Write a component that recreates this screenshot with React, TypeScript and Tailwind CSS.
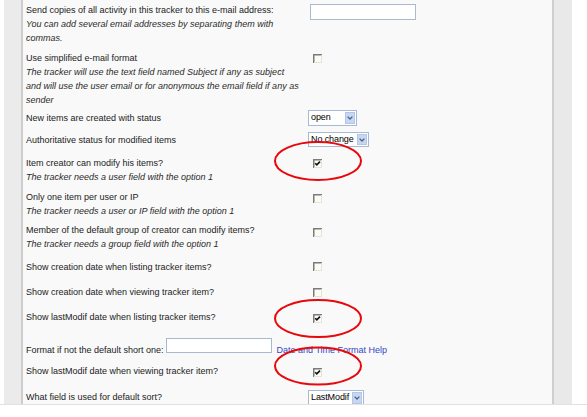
import React from 'react';

const font = "font-['Liberation_Sans',Arial,sans-serif]";

const Check = ({ checked = false, className = '' }: { checked?: boolean; className?: string }) => (
    <svg width="9" height="9" viewBox="0 0 9 9" className={`block ${className}`}>
        <rect x="0" y="0" width="9" height="9" fill="#fcfcf4" />
        <path d="M0.75 9 V0.75 H9" fill="none" stroke="#7b7b78" strokeWidth="1.5" />
        <path d="M8.5 1 V8.5 H1" fill="none" stroke="#e4e3da" strokeWidth="1" />
        {checked && <path d="M2.2 4.2 L3.8 5.9 L7 2.6" fill="none" stroke="#111" strokeWidth="1.6" />}
    </svg>
);

const Select = ({ value, className = '' }: { value: string; className?: string }) => (
    <div className={`flex items-stretch border border-[#a7b9d6] bg-white ${className}`}>
        <div className="flex-1 pl-[2px] text-[9px] leading-[13px] tracking-[-0.1px] text-black whitespace-nowrap">{value}</div>
        <div className="w-[10px] my-[1px] mr-[1px] bg-[#c7d6f1] border border-[#b3c6e6] flex items-center justify-center">
            <svg width="6" height="4" viewBox="0 0 6 4">
                <path d="M0.6 0.6 L3 3 L5.4 0.6" fill="none" stroke="#4b5f87" strokeWidth="1.3" />
            </svg>
        </div>
    </div>
);

const Label = ({ children }: { children: React.ReactNode }) => <div className="text-[#222]">{children}</div>;
const Hint = ({ children }: { children: React.ReactNode }) => <div className="italic text-[#2a2a2a]">{children}</div>;

export default function App() {
    return (
        <div className={`w-[587px] h-[417px] bg-white overflow-hidden relative ${font}`}>
            <div className="flex h-[405px] border-b border-[#e2e2e2]">
                <div className="w-[4px] bg-white" />
                <div className="w-[17px] bg-[#ebebeb]" />
                <div className="w-[2px] bg-[#cdcdcd]" />

                {/* settings table */}
                <div className="w-[529px] bg-[#f9f9f9] pl-[3px] pt-[3px] text-[9px] leading-[14px] overflow-hidden">
                    <div className="flex h-[48px]">
                        <div className="w-[282px]">
                            <Label>Send copies of all activity in this tracker to this e-mail address:</Label>
                            <Hint>You can add several email addresses by separating them with<br />commas.</Hint>
                        </div>
                        <div className="mt-[1px] ml-[2px] w-[106px] h-[16px] border border-[#a9b9cf] bg-white" />
                    </div>

                    <div className="flex h-[60px]">
                        <div className="w-[282px]">
                            <Label>Use simplified e-mail format</Label>
                            <Hint>
                                The tracker will use the text field named Subject if any as subject<br />
                                and will use the user email or for anonymous the email field if any as<br />
                                sender
                            </Hint>
                        </div>
                        <Check className="mt-[3px] ml-[5px]" />
                    </div>

                    <div className="flex h-[22px]">
                        <div className="w-[282px]"><Label>New items are created with status</Label></div>
                        <Select value="open" className="-mt-[1px] w-[49px] h-[16px]" />
                    </div>

                    <div className="flex h-[23px]">
                        <div className="w-[282px]"><Label>Authoritative status for modified items</Label></div>
                        <Select value="No change" className="-mt-[1px] w-[61px] h-[15px]" />
                    </div>

                    <div className="flex h-[34px]">
                        <div className="w-[282px]">
                            <Label>Item creator can modify his items?</Label>
                            <Hint>The tracker needs a user field with the option 1</Hint>
                        </div>
                        <Check checked className="mt-[3px] ml-[5px]" />
                    </div>

                    <div className="flex h-[33px]">
                        <div className="w-[282px]">
                            <Label>Only one item per user or IP</Label>
                            <Hint>The tracker needs a user or IP field with the option 1</Hint>
                        </div>
                        <Check className="mt-[4px] ml-[5px]" />
                    </div>

                    <div className="flex h-[37px]">
                        <div className="w-[282px]">
                            <Label>Member of the default group of creator can modify items?</Label>
                            <Hint>The tracker needs a group field with the option 1</Hint>
                        </div>
                        <Check className="mt-[5px] ml-[5px]" />
                    </div>

                    <div className="flex h-[25px]">
                        <div className="w-[282px]"><Label>Show creation date when listing tracker items?</Label></div>
                        <Check className="mt-[2px] ml-[5px]" />
                    </div>

                    <div className="flex h-[25px]">
                        <div className="w-[282px]"><Label>Show creation date when viewing tracker item?</Label></div>
                        <Check className="mt-[3px] ml-[5px]" />
                    </div>

                    <div className="flex h-[28px]">
                        <div className="w-[282px]"><Label>Show lastModif date when listing tracker items?</Label></div>
                        <Check checked className="mt-[4px] ml-[5px]" />
                    </div>

                    <div className="flex h-[26px] items-start">
                        <div className="mt-[5px] text-[#222] whitespace-nowrap">Format if not the default short one:</div>
                        <div className="ml-[2px] w-[106px] h-[15px] border border-[#a9b9cf] bg-white" />
                        <a className="mt-[5px] ml-[5px] text-[#3447c4] whitespace-nowrap">Date and Time Format Help</a>
                    </div>

                    <div className="flex h-[26px]">
                        <div className="w-[282px]"><Label>Show lastModif date when viewing tracker item?</Label></div>
                        <Check checked className="mt-[4px] ml-[5px]" />
                    </div>

                    <div className="flex h-[30px]">
                        <div className="w-[282px]"><Label>What field is used for default sort?</Label></div>
                        <Select value="LastModif" className="w-[56px] h-[16px]" />
                    </div>
                </div>

                <div className="w-[2px] bg-[#cfcfcf]" />
                <div className="w-[18px] bg-[#e9e9e9]" />
                <div className="flex-1 bg-white" />
            </div>

            {/* red annotation rings */}
            <svg className="absolute left-0 top-0 pointer-events-none" width="587" height="417">
                <ellipse cx="318" cy="161" rx="43" ry="19" fill="none" stroke="#e8070b" strokeWidth="2" />
                <ellipse cx="318" cy="318.5" rx="43" ry="18.5" fill="none" stroke="#e8070b" strokeWidth="2" />
                <ellipse cx="318" cy="366" rx="43" ry="18.5" fill="none" stroke="#e8070b" strokeWidth="2" />
            </svg>
        </div>
    );
}
